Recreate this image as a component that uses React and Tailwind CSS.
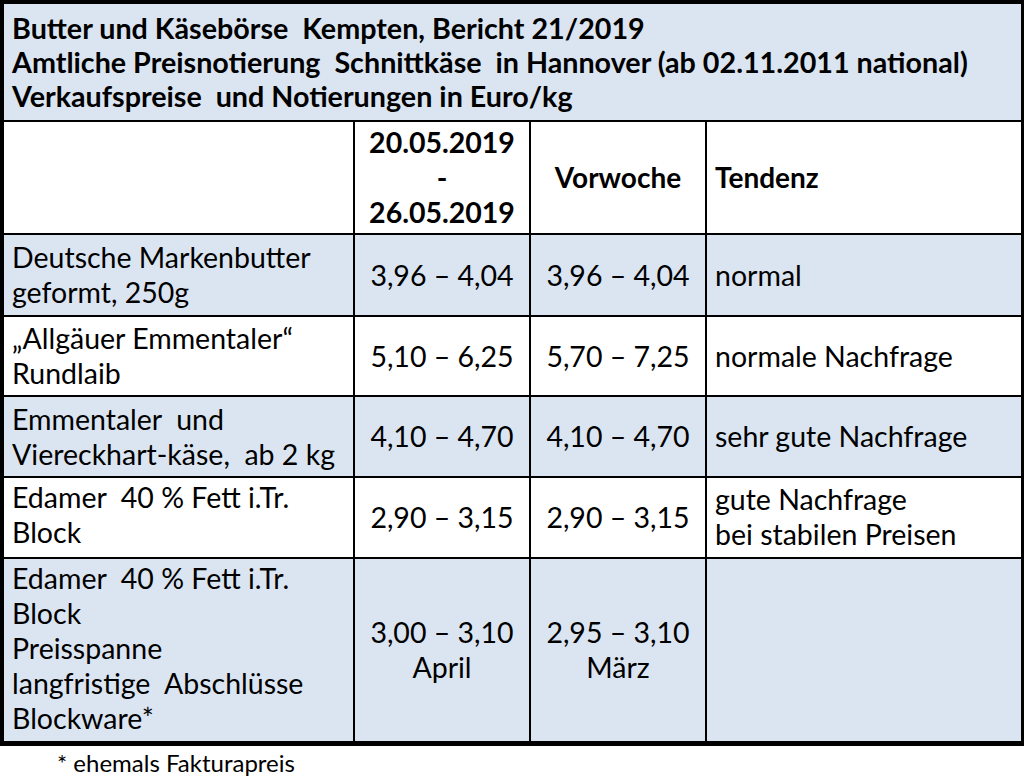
import React from "react";

const cell = "bg-white flex items-center";
const blue = "bg-[#dbe5f1] flex items-center";

function Val({ children, bg }) {
  return (
    <div className={`${bg} justify-center text-center`}>
      <div>{children}</div>
    </div>
  );
}

export default function App() {
  return (
    <div
      className="w-[1024px] h-[777px] bg-white text-black text-[28.5px] leading-[35px]"
      style={{ fontFamily: '"Lato", "Liberation Sans", sans-serif' }}
    >
      <div className="border-l-4 border-t-4 border-r-[3px] border-b-[5px] border-black bg-black">
        <div className="grid grid-cols-[349px_174px_174px_314px] grid-rows-[116px_111px_80px_78px_79px_79px_182px] gap-[2px]">
          {/* Title band */}
          <div className="col-span-4 bg-[#dbe5f1] pl-2 pt-[7px] font-bold text-[28.7px] leading-[34px] whitespace-nowrap">
            <div>Butter und Käsebörse&nbsp; Kempten, Bericht 21/2019</div>
            <div>Amtliche Preisnotierung&nbsp; Schnittkäse&nbsp; in Hannover (ab 02.11.2011 national)</div>
            <div>Verkaufspreise&nbsp; und Notierungen in Euro/kg</div>
          </div>

          {/* Column headers */}
          <div className="bg-white"></div>
          <div className="bg-white flex items-center justify-center text-center font-bold text-[28.5px]">
            <div>
              <div>20.05.2019</div>
              <div>-</div>
              <div>26.05.2019</div>
            </div>
          </div>
          <div className="bg-white flex items-center justify-center font-bold text-[28px]">Vorwoche</div>
          <div className="bg-white flex items-center pl-2 font-bold text-[28px]">Tendenz</div>

          {/* Row 1 */}
          <div className={`${blue} pl-2`}>
            <div>
              <div>Deutsche Markenbutter</div>
              <div>geformt, 250g</div>
            </div>
          </div>
          <Val bg={blue}>3,96 – 4,04</Val>
          <Val bg={blue}>3,96 – 4,04</Val>
          <div className={`${blue} pl-2`}>normal</div>

          {/* Row 2 */}
          <div className={`${cell} pl-2`}>
            <div>
              <div>„Allgäuer Emmentaler“</div>
              <div>Rundlaib</div>
            </div>
          </div>
          <Val bg={cell}>5,10 – 6,25</Val>
          <Val bg={cell}>5,70 – 7,25</Val>
          <div className={`${cell} pl-2`}>normale Nachfrage</div>

          {/* Row 3 */}
          <div className={`${blue} pl-2`}>
            <div>
              <div>Emmentaler&nbsp; und</div>
              <div>Viereckhart-käse,&nbsp; ab 2 kg</div>
            </div>
          </div>
          <Val bg={blue}>4,10 – 4,70</Val>
          <Val bg={blue}>4,10 – 4,70</Val>
          <div className={`${blue} pl-2`}>sehr gute Nachfrage</div>

          {/* Row 4 */}
          <div className="bg-white pl-2 pt-[2px]">
            <div>Edamer&nbsp; 40 % Fett i.Tr.</div>
            <div>Block</div>
          </div>
          <Val bg={cell}>2,90 – 3,15</Val>
          <Val bg={cell}>2,90 – 3,15</Val>
          <div className="bg-white pl-2 pt-[4px]">
            <div>gute Nachfrage</div>
            <div>bei stabilen Preisen</div>
          </div>

          {/* Row 5 */}
          <div className="bg-[#dbe5f1] pl-2 pt-[2px]">
            <div>Edamer&nbsp; 40 % Fett i.Tr.</div>
            <div>Block</div>
            <div>Preisspanne</div>
            <div>langfristige&nbsp; Abschlüsse</div>
            <div>Blockware*</div>
          </div>
          <Val bg={blue}>
            <div>3,00 – 3,10</div>
            <div>April</div>
          </Val>
          <Val bg={blue}>
            <div>2,95 – 3,10</div>
            <div>März</div>
          </Val>
          <div className="bg-[#dbe5f1]"></div>
        </div>
      </div>
      <div className="pl-[57px] pt-[3px] text-[24px] leading-[28px]">* ehemals Fakturapreis</div>
    </div>
  );
}
